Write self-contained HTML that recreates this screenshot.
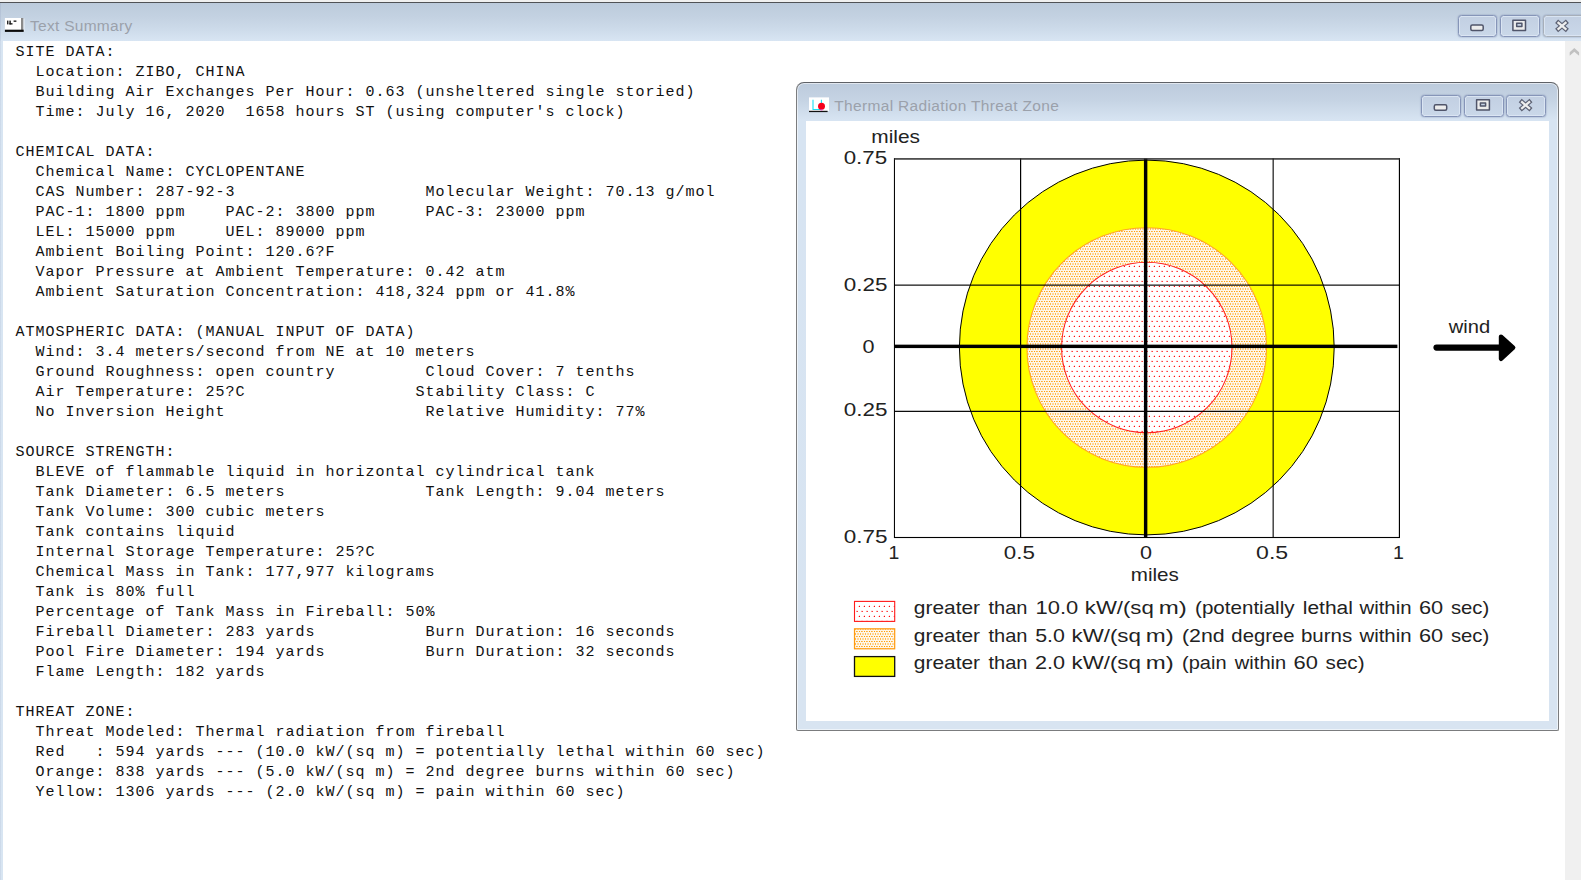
<!DOCTYPE html>
<html>
<head>
<meta charset="utf-8">
<title>Text Summary</title>
<style>
html,body{margin:0;padding:0;overflow:hidden;}
body{width:1581px;height:880px;overflow:hidden;background:#fff;position:relative;font-family:"Liberation Sans",sans-serif;}
.abs{position:absolute;}
#topstrip{left:0;top:0;width:1581px;height:2px;background:#f0f0f0;}
#topline{left:0;top:1.9px;width:1581px;height:1.4px;background:#505256;}
#titlebar{left:0;top:3px;width:1581px;height:38px;background:linear-gradient(#bccbdc 0%,#c3d1e1 35%,#cddbea 70%,#d8e5f3 100%);}
#leftborder{left:0;top:41px;width:2.6px;height:839px;background:linear-gradient(90deg,#cbd8e8 0,#cfdcec 35%,#d8e5f2 40%,#d8e5f2 100%);}
#scroll{left:1565px;top:41px;width:16px;height:839px;background:#f0f0f0;}
#title1{left:30px;top:16px;font-size:15.5px;line-height:20px;color:#9ba1ab;white-space:nowrap;letter-spacing:0.28px;}
.btn{position:absolute;box-sizing:border-box;border:1px solid #8695b8;border-radius:3.5px;background:linear-gradient(#c2cfe2,#cad8e9);box-shadow:inset 0 0 0 1px rgba(222,232,245,0.8),0 0 1.5px rgba(105,120,165,0.95);}
#txt{left:15.5px;top:43px;margin:0;font-family:"Liberation Mono",monospace;font-size:15px;letter-spacing:1px;line-height:20px;color:#111;white-space:pre;}
#win2{left:796px;top:82px;width:763px;height:649px;box-sizing:border-box;border-style:solid;border-width:1.3px 1.9px 1.9px 1.9px;border-color:#5e6166 #7b7c7e #7b7c7e #7b7c7e;border-radius:8px 8px 2px 2px;background:linear-gradient(#bccbdc 0px,#c6d4e4 18px,#d7e4f2 37px,#d8e4f1 100%);box-shadow:inset 0 0 0 1px rgba(255,255,255,0.55);}
#win2c{left:806px;top:121px;width:742.8px;height:599.8px;background:#fff;}
#title2{left:834.2px;top:96.1px;font-size:15.5px;line-height:20px;color:#9ba1ab;white-space:nowrap;letter-spacing:0.34px;}
.lbl{position:absolute;font-size:17px;line-height:20px;color:#222;white-space:nowrap;}
</style>
</head>
<body>
<div id="topstrip" class="abs"></div>
<div id="topline" class="abs"></div>
<div id="titlebar" class="abs"></div>
<div id="leftborder" class="abs"></div>
<div id="scroll" class="abs"></div>
<div class="abs" style="left:0;top:3px;width:1px;height:38px;background:rgba(140,155,185,0.22)"></div>

<!-- main title icon -->
<svg class="abs" style="left:4px;top:17px" width="22" height="17" viewBox="4 17 22 17">
<rect x="4.9" y="18" width="16.2" height="11.9" fill="#fff"/>
<rect x="21" y="18" width="2.4" height="12" fill="#8a8a8a"/>
<rect x="23.4" y="18.4" width="1.2" height="13" fill="#fff" fill-opacity="0.55"/>
<rect x="4.9" y="29.7" width="18.8" height="2.2" fill="#0a0a0a"/>
<rect x="7.1" y="20.6" width="1.3" height="3.8" fill="#111"/><rect x="9.4" y="20.6" width="1.4" height="3.8" fill="#111"/><rect x="9.4" y="23.2" width="3.1" height="1.3" fill="#111"/><rect x="13.6" y="20.5" width="2.8" height="1.3" fill="#111"/>
</svg>
<div id="title1" class="abs">Text Summary</div>

<!-- main window buttons -->
<div class="btn" style="left:1458px;top:15px;width:39px;height:22px;"></div>
<div class="btn" style="left:1500px;top:15px;width:40px;height:22px;"></div>
<div class="btn" style="left:1543px;top:15px;width:42px;height:22px;border-color:#a7afb9;"></div>
<svg class="abs" style="left:1440px;top:5px" width="141" height="40" viewBox="1440 5 141 40">
<rect x="1470.8" y="24.9" width="12.4" height="5.5" rx="1.5" fill="#ececec" stroke="#50556a" stroke-width="1.5"/>
<path d="M1512.9 20.2h12.6v10.2h-12.6z M1516.7 23.3v3.1h5.2v-3.1z" fill="#ececec" fill-rule="evenodd" stroke="#50556a" stroke-width="1.5" stroke-linejoin="round"/>
<g stroke-linecap="butt"><path d="M1556.6 21.2l10.8 9.2M1567.4 21.2l-10.8 9.2" stroke="#5d6274" stroke-width="4.6" fill="none"/><path d="M1557.6 22.05l8.8 7.5M1566.4 22.05l-8.8 7.5" stroke="#eeeeee" stroke-width="2.3" fill="none"/></g>
</svg>
<!-- scrollbar arrow -->
<svg class="abs" style="left:1565px;top:41px" width="16" height="20" viewBox="1565 41 16 20"><path d="M1574.3 48 L1579.1 52.3 L1579.1 55.8 L1574.3 51.7 L1569.7 55.8 L1569.7 52.3 Z" fill="#c1c1c1"/></svg>

<pre id="txt" class="abs">SITE DATA<span>:</span>
  Location: ZIBO, CHINA
  Building Air Exchanges Per Hour: 0.63 (unsheltered single storied)
  Time: July 16, 2020  1658 hours ST (using computer's clock)

CHEMICAL DATA<span>:</span>
  Chemical Name: CYCLOPENTANE
  CAS Number: 287-92-3                   Molecular Weight: 70.13 g/mol
  PAC-1: 1800 ppm    PAC-2: 3800 ppm     PAC-3: 23000 ppm
  LEL: 15000 ppm     UEL: 89000 ppm
  Ambient Boiling Point: 120.6?F
  Vapor Pressure at Ambient Temperature: 0.42 atm
  Ambient Saturation Concentration: 418,324 ppm or 41.8%

ATMOSPHERIC DATA<span>:</span> (MANUAL INPUT OF DATA)
  Wind: 3.4 meters/second from NE at 10 meters
  Ground Roughness: open country         Cloud Cover: 7 tenths
  Air Temperature: 25?C                 Stability Class: C
  No Inversion Height                    Relative Humidity: 77%

SOURCE STRENGTH:
  BLEVE of flammable liquid in horizontal cylindrical tank
  Tank Diameter: 6.5 meters              Tank Length: 9.04 meters
  Tank Volume: 300 cubic meters
  Tank contains liquid
  Internal Storage Temperature: 25?C
  Chemical Mass in Tank: 177,977 kilograms
  Tank is 80% full
  Percentage of Tank Mass in Fireball: 50%
  Fireball Diameter: 283 yards           Burn Duration: 16 seconds
  Pool Fire Diameter: 194 yards          Burn Duration: 32 seconds
  Flame Length: 182 yards

THREAT ZONE:
  Threat Modeled: Thermal radiation from fireball
  Red   : 594 yards --- (10.0 kW/(sq m) = potentially lethal within 60 sec)
  Orange: 838 yards --- (5.0 kW/(sq m) = 2nd degree burns within 60 sec)
  Yellow: 1306 yards --- (2.0 kW/(sq m) = pain within 60 sec)</pre>

<!-- inner window -->
<div id="win2" class="abs"></div>
<div id="win2c" class="abs"></div>
<svg class="abs" style="left:808px;top:97px" width="22" height="17" viewBox="0 0 22 17">
<rect x="1" y="0.4" width="20" height="13.6" fill="#fff"/>
<rect x="1" y="13.8" width="18.6" height="1.3" fill="#111"/>
<path d="M5 2.7v9.8h8.4M13.4 2.7v4" stroke="#18e0f4" stroke-width="1.1" fill="none"/>
<circle cx="13.5" cy="9.2" r="3.5" fill="#f4001c"/>
<rect x="12.6" y="12.2" width="1.8" height="1.2" fill="#f020c0"/>
</svg>
<div id="title2" class="abs">Thermal Radiation Threat Zone</div>
<div class="btn" style="left:1421px;top:95px;width:40px;height:22px;"></div>
<div class="btn" style="left:1464px;top:95px;width:40px;height:22px;"></div>
<div class="btn" style="left:1506px;top:95px;width:40px;height:22px;"></div>
<svg class="abs" style="left:1420px;top:90px" width="130" height="30" viewBox="1420 90 130 30">
<rect x="1434.3" y="104.7" width="12.4" height="5.5" rx="1.5" fill="#ececec" stroke="#50556a" stroke-width="1.5"/>
<path d="M1476.6 99.8h12.8v10.2h-12.8z M1480.4 102.9v3.1h5.2v-3.1z" fill="#ececec" fill-rule="evenodd" stroke="#50556a" stroke-width="1.5" stroke-linejoin="round"/>
<g stroke-linecap="butt"><path d="M1520.2 100.6l10.8 9.2M1531 100.6l-10.8 9.2" stroke="#5d6274" stroke-width="4.6" fill="none"/><path d="M1521.2 101.45l8.8 7.5M1530 101.45l-8.8 7.5" stroke="#eeeeee" stroke-width="2.3" fill="none"/></g>
</svg>
<svg class="abs" style="left:806px;top:121px" width="743" height="599" viewBox="806 121 743 599">
<defs>
<pattern id="pr" x="0" y="0" width="5" height="10" patternUnits="userSpaceOnUse">
<rect width="5" height="10" fill="#fff"/>
<rect x="1" y="1" width="1" height="1" fill="#ff0000" fill-opacity="0.45"/>
<rect x="2" y="1" width="1" height="1" fill="#ff0000" fill-opacity="0.75"/>
<rect x="1" y="0" width="2" height="1" fill="#ff0000" fill-opacity="0.08"/>
<rect x="4" y="6" width="1" height="1" fill="#ff0000" fill-opacity="0.95"/>
<rect x="3" y="6" width="1" height="1" fill="#ff0000" fill-opacity="0.2"/>
<rect x="4" y="5" width="1" height="1" fill="#ff0000" fill-opacity="0.2"/>
</pattern>
<pattern id="po" x="0" y="0" width="5" height="5" patternUnits="userSpaceOnUse">
<rect width="5" height="5" fill="#fff"/>
<rect x="4" y="1" width="1" height="1" fill="#ff9c00" fill-opacity="1"/>
<rect x="1" y="1" width="1" height="1" fill="#ff9c00" fill-opacity="0.8"/>
<rect x="2" y="1" width="1" height="1" fill="#ff9c00" fill-opacity="0.6"/>
<rect x="0" y="3" width="1" height="2" fill="#ff9c00" fill-opacity="0.65"/>
<rect x="2" y="3" width="2" height="2" fill="#ff9c00" fill-opacity="0.35"/>
<rect x="0" y="0" width="5" height="5" fill="#ff9c00" fill-opacity="0.085"/>
</pattern>
<clipPath id="plotclip"><rect x="894" y="158.4" width="506" height="379.6"/></clipPath>
</defs>
<g clip-path="url(#plotclip)">
<circle cx="1146.8" cy="347.5" r="187.4" fill="#ffff00" stroke="#000" stroke-width="1"/>
<circle cx="1146.75" cy="347.5" r="119.8" fill="url(#po)" stroke="#ffa626" stroke-width="1.1"/>
<circle cx="1146.8" cy="347.5" r="85.2" fill="url(#pr)" stroke="#ff2020" stroke-width="1.05"/>
</g>
<!-- grid -->
<g fill="#000">
<rect x="1020" y="158.4" width="1.2" height="379.4"/>
<rect x="1272.6" y="158.4" width="1.1" height="379.4"/>
<rect x="894" y="284.55" width="506" height="1.15"/>
<rect x="894" y="410.75" width="506" height="1.2"/>
<rect x="1143.92" y="158.6" width="3.43" height="378.6"/>
<rect x="894" y="344.65" width="503.4" height="3.43"/>
<rect x="893.92" y="158.2" width="1.05" height="379.8"/>
<rect x="1398.85" y="158.2" width="1.15" height="379.8"/>
<rect x="894" y="536.95" width="506" height="1.1"/>
<rect x="894" y="158.2" width="506" height="1.45" fill="#262626"/>
</g>
<!-- wind arrow -->
<path d="M1436.5 347.6 H1500" stroke="#000" stroke-width="6.2" stroke-linecap="round" fill="none"/>
<path d="M1501 336.6 L1513.2 347.6 L1501 358.8 Z" fill="#000" stroke="#000" stroke-width="4.4" stroke-linejoin="round"/>
<!-- labels -->
<g font-family="Liberation Sans, sans-serif" font-size="18" fill="#222">
<text transform="translate(871.29,142.7) scale(1.1608,1)">miles</text>
<text transform="translate(843.70,164.2) scale(1.2418,1)">0.75</text>
<text transform="translate(843.80,290.5) scale(1.2477,1)">0.25</text>
<text transform="translate(862.53,353.1) scale(1.2000,1)">0</text>
<text transform="translate(843.80,416.1) scale(1.2477,1)">0.25</text>
<text transform="translate(843.80,542.5) scale(1.2507,1)">0.75</text>
<text transform="translate(888.59,559.1) scale(1.0789,1)">1</text>
<text transform="translate(1003.80,559.1) scale(1.2431,1)">0.5</text>
<text transform="translate(1140.12,559.1) scale(1.2000,1)">0</text>
<text transform="translate(1256.08,559.1) scale(1.2811,1)">0.5</text>
<text transform="translate(1393.07,559.1) scale(1.0912,1)">1</text>
<text transform="translate(1130.71,580.5) scale(1.1460,1)">miles</text>
<text transform="translate(1448.71,333.0) scale(1.1188,1)">wind</text>
<text transform="translate(913.85,614.4) scale(1.1617,1)">greater</text>
<text transform="translate(988.50,614.4) scale(1.1140,1)">than</text>
<text transform="translate(1035.53,614.4) scale(1.2194,1)">10.0</text>
<text transform="translate(1084.81,614.4) scale(1.2328,1)">kW/(sq</text>
<text transform="translate(1158.70,614.4) scale(1.3364,1)">m)</text>
<text transform="translate(1195.03,614.4) scale(1.1438,1)">(potentially</text>
<text transform="translate(1302.79,614.4) scale(1.1641,1)">lethal</text>
<text transform="translate(1359.42,614.4) scale(1.1327,1)">within</text>
<text transform="translate(1418.88,614.4) scale(1.2120,1)">60</text>
<text transform="translate(1450.88,614.4) scale(1.1283,1)">sec)</text>
<text transform="translate(913.85,641.7) scale(1.1617,1)">greater</text>
<text transform="translate(988.50,641.7) scale(1.1140,1)">than</text>
<text transform="translate(1035.23,641.7) scale(1.1869,1)">5.0</text>
<text transform="translate(1071.50,641.7) scale(1.2403,1)">kW/(sq</text>
<text transform="translate(1145.80,641.7) scale(1.3311,1)">m)</text>
<text transform="translate(1182.00,641.7) scale(1.1852,1)">(2nd</text>
<text transform="translate(1231.37,641.7) scale(1.1268,1)">degree</text>
<text transform="translate(1300.92,641.7) scale(1.1375,1)">burns</text>
<text transform="translate(1359.42,641.7) scale(1.1327,1)">within</text>
<text transform="translate(1418.88,641.7) scale(1.2120,1)">60</text>
<text transform="translate(1450.88,641.7) scale(1.1283,1)">sec)</text>
<text transform="translate(913.85,669.0) scale(1.1617,1)">greater</text>
<text transform="translate(988.50,669.0) scale(1.1140,1)">than</text>
<text transform="translate(1034.89,669.0) scale(1.2010,1)">2.0</text>
<text transform="translate(1071.50,669.0) scale(1.2403,1)">kW/(sq</text>
<text transform="translate(1145.80,669.0) scale(1.3311,1)">m)</text>
<text transform="translate(1182.06,669.0) scale(1.1108,1)">(pain</text>
<text transform="translate(1234.81,669.0) scale(1.1172,1)">within</text>
<text transform="translate(1293.57,669.0) scale(1.2173,1)">60</text>
<text transform="translate(1325.58,669.0) scale(1.1466,1)">sec)</text>
</g>
<!-- legend boxes -->
<rect x="854.5" y="601.4" width="40.2" height="20" fill="url(#pr)" stroke="#ff1a1a" stroke-width="1.1"/>
<rect x="854.5" y="628.8" width="40.2" height="20" fill="url(#po)" stroke="#ff9a10" stroke-width="1.2"/>
<rect x="854.5" y="656.6" width="40.2" height="19.8" fill="#ffff00" stroke="#111" stroke-width="1.3"/>
</svg>

</body>
</html>
